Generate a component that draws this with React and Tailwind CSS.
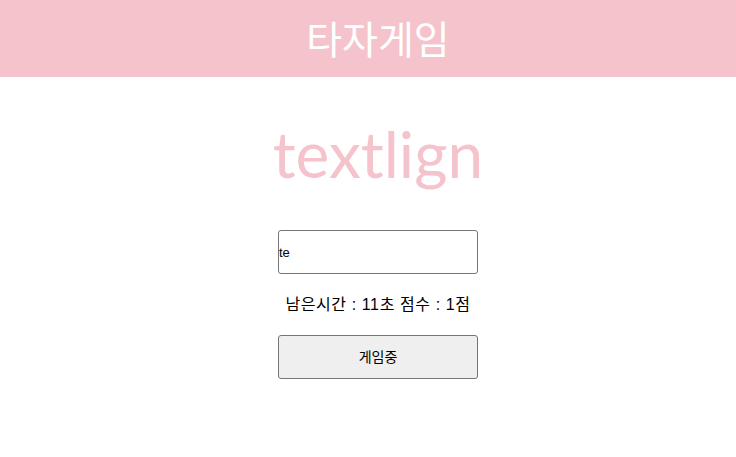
import { useState } from "react";

function App() {
  const [value, setValue] = useState("te");
  const time = 11;
  const score = 1;

  return (
    <div className="min-h-[457px] bg-white font-['Noto_Sans','Noto_Sans_CJK_KR',sans-serif]">
      <header className="h-[77px] bg-[#f5c3cc] flex items-center justify-center pl-[20px]">
        <h1 className="text-[39px] text-white leading-none">타자게임</h1>
      </header>
      <div className="flex flex-col items-center pl-[20px]">
        <p className="mt-[38px] text-[64px] leading-none text-[#f5c3cc] h-[78px] flex items-center font-['Lato',sans-serif]">
          textlign
        </p>
        <input
          className="mt-[37px] w-[200px] h-[44px] border border-[#767676] rounded-[3px] px-0 text-[13px] text-black font-['Liberation_Sans',sans-serif] outline-none"
          value={value}
          onChange={(e) => setValue(e.target.value)}
        />
        <p className="mt-[20px] text-[16px] tracking-[0.6px] text-black leading-[22px] font-['Liberation_Sans','Noto_Sans_CJK_KR',sans-serif]">
          남은시간 : {time}초 점수 : {score}점
        </p>
        <button className="mt-[19px] w-[200px] h-[44px] bg-[#efefef] border border-[#767676] rounded-[3px] text-[14px] text-black font-['Liberation_Sans','Noto_Sans_CJK_KR',sans-serif]">
          게임중
        </button>
      </div>
    </div>
  );
}

export default App;
